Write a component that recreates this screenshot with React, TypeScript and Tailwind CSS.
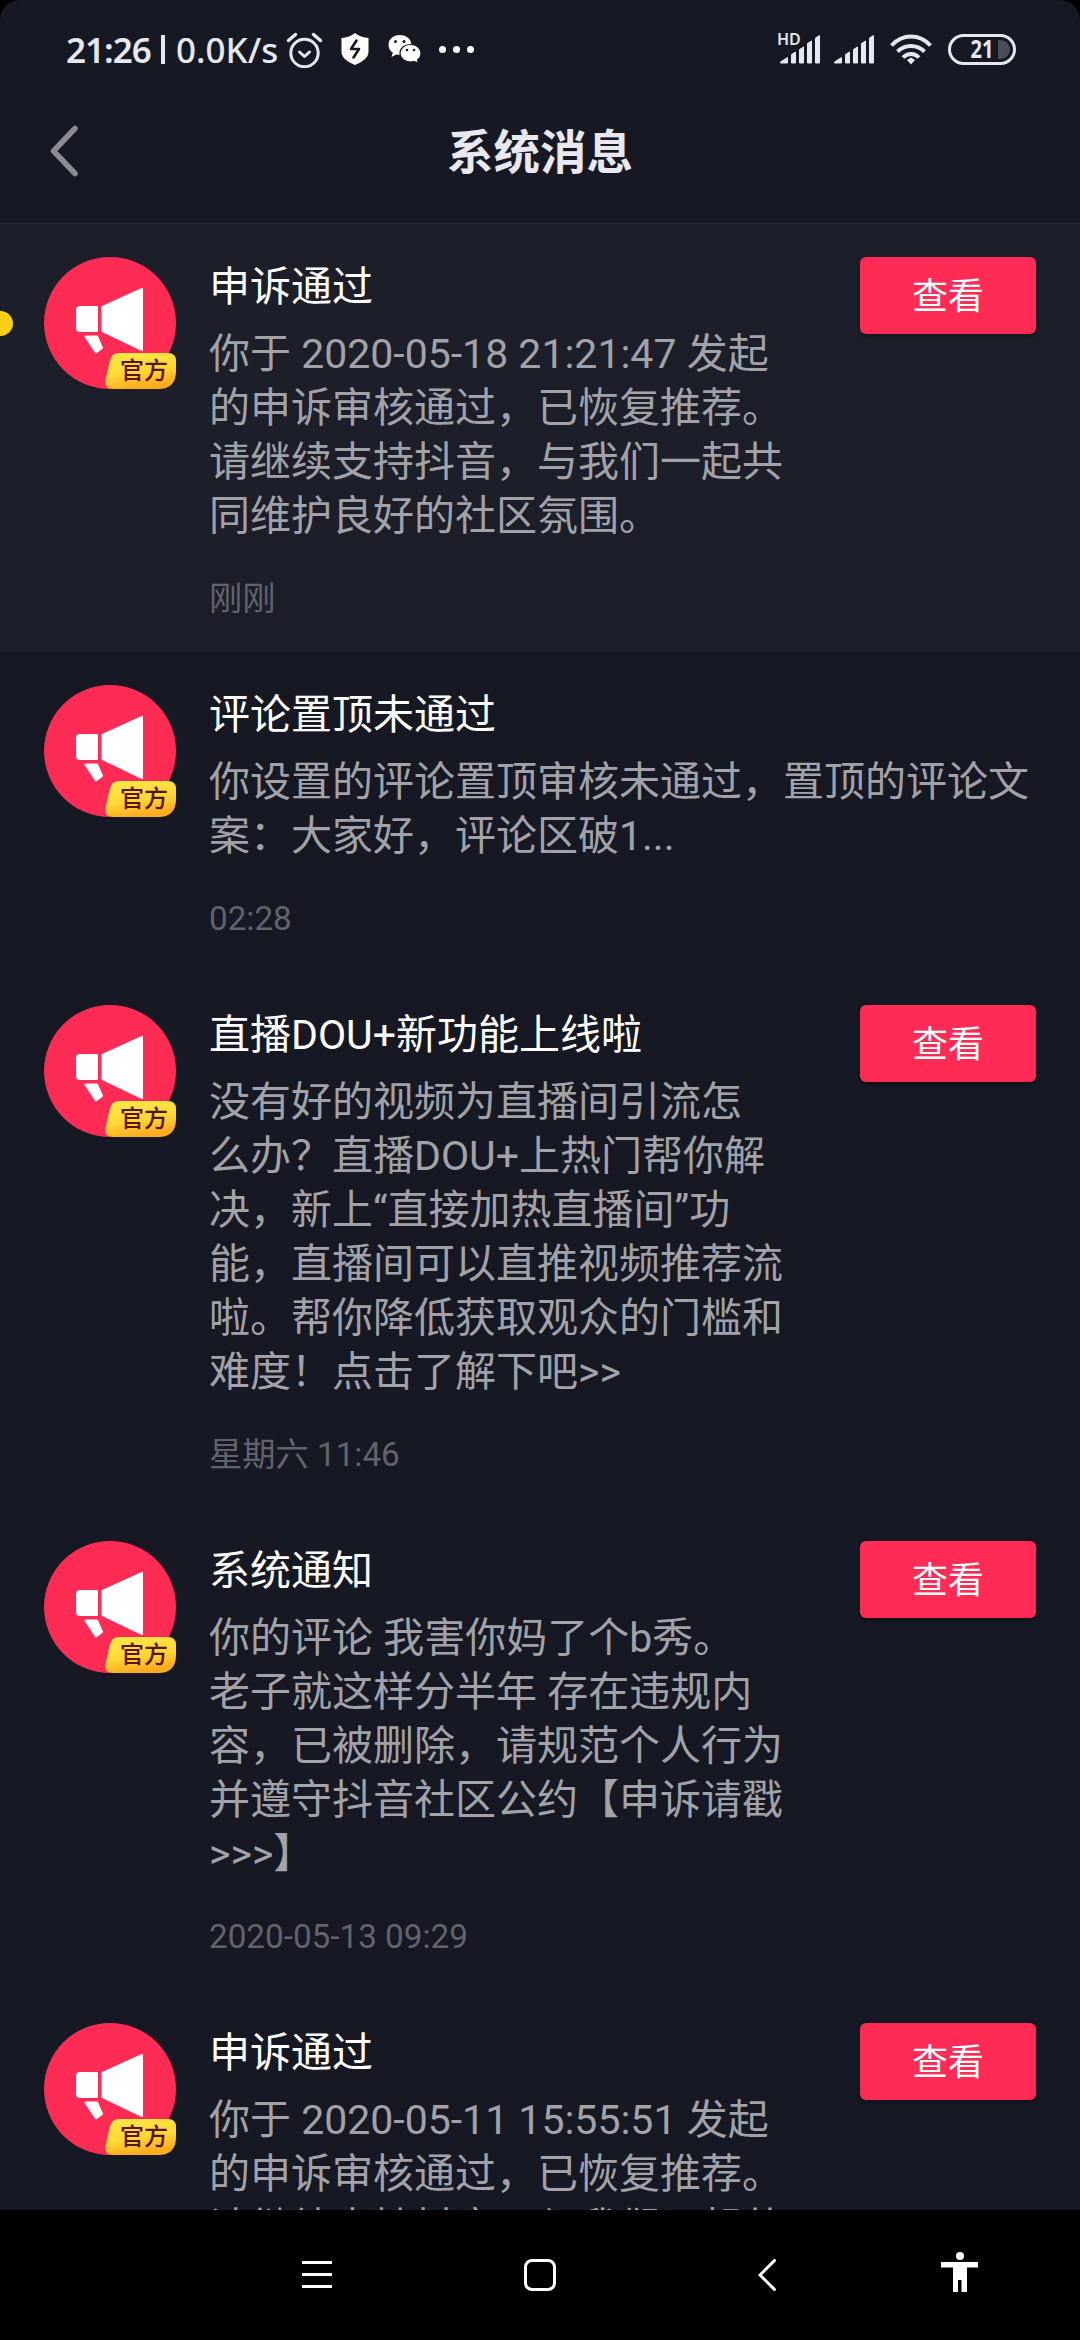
import type { ReactNode } from 'react';

interface Message {
  id: number;
  title: string;
  lines: string[];
  time: string;
  action?: string;
  unread?: boolean;
}

const MESSAGES: Message[] = [
  {
    id: 1,
    title: '申诉通过',
    lines: [
      '你于 2020-05-18 21:21:47 发起',
      '的申诉审核通过，已恢复推荐。',
      '请继续支持抖音，与我们一起共',
      '同维护良好的社区氛围。'
    ],
    time: '刚刚',
    action: '查看',
    unread: true
  },
  {
    id: 2,
    title: '评论置顶未通过',
    lines: ['你设置的评论置顶审核未通过，置顶的评论文', '案：大家好，评论区破1...'],
    time: '02:28'
  },
  {
    id: 3,
    title: '直播DOU+新功能上线啦',
    lines: [
      '没有好的视频为直播间引流怎',
      '么办？直播DOU+上热门帮你解',
      '决，新上“直接加热直播间”功',
      '能，直播间可以直推视频推荐流',
      '啦。帮你降低获取观众的门槛和',
      '难度！点击了解下吧>>'
    ],
    time: '星期六 11:46',
    action: '查看'
  },
  {
    id: 4,
    title: '系统通知',
    lines: [
      '你的评论 我害你妈了个b秀。',
      '老子就这样分半年 存在违规内',
      '容，已被删除，请规范个人行为',
      '并遵守抖音社区公约【申诉请戳',
      '>>>】'
    ],
    time: '2020-05-13 09:29',
    action: '查看'
  },
  {
    id: 5,
    title: '申诉通过',
    lines: [
      '你于 2020-05-11 15:55:51 发起',
      '的申诉审核通过，已恢复推荐。',
      '请继续支持抖音，与我们一起共'
    ],
    time: '',
    action: '查看'
  }
];

function SignalBars() {
  return (
    <svg width="42" height="31" viewBox="0 0 42 31" fill="#e6e8f0" stroke="#e6e8f0" strokeWidth="1" strokeLinejoin="round">
      <path d="M1.500 29v-1L8.500 23.500V29z" />
      <path d="M12.500 29V20.500l4-2.500v11z" />
      <path d="M20.500 29V15.500l4-2.500v16z" />
      <path d="M28.500 29V9.500l4-2.500v22z" />
      <path d="M36.500 29V4l4-2.500V29z" />
    </svg>
  );
}

function StatusBar() {
  return (
    <div className="flex h-[98px] items-center text-[#e6e8f0]">
      <div className="ml-[66px] flex w-[220px] items-center whitespace-pre font-['Noto_Sans'] text-[35px] font-semibold leading-none">
        <span className="w-[86px] tracking-[-1px]">21:26</span>
        <span className="ml-[9px] h-[29px] w-[4px] bg-[#e6e8f0]" />
        <span className="ml-[11px] font-medium">0.0K/s</span>
      </div>
      <svg width="37" height="38" viewBox="0 0 37 38" fill="none" stroke="#e6e8f0" strokeWidth="3" strokeLinecap="round" strokeLinejoin="round">
        <circle cx="18.500" cy="23" r="13.700" />
        <path d="M13.500 22l5 4.500 5-4.500" />
        <path d="M2.500 10.500l7-6M34.500 10.500l-7-6" strokeWidth="3.500" />
      </svg>
      <svg className="ml-[17px]" width="30" height="34" viewBox="0 0 30 34">
        <path d="M15 1c3.500 3 8.500 4.500 13.500 5v13.500c0 6.500-6 10.500-13.500 13.500C7.500 30 1.500 26 1.500 19.500V6c5-.5 10-2 13.500-5z" fill="#fff" />
        <path d="M16.500 8.500l-5.500 8.500 8 0-5.500 8.500" fill="none" stroke="#161823" strokeWidth="2.600" strokeLinejoin="round" strokeLinecap="round" />
      </svg>
      <svg className="ml-[17px]" width="36" height="32" viewBox="0 0 36 32">
        <path d="M13 2C6 2 1.500 6.500 1.500 12c0 3.300 1.700 6 4.300 7.800L4.500 24l4.800-2.400c1.200.3 2.400.4 3.700.4 6.500 0 11.500-4.400 11.500-10S19.500 2 13 2z" fill="#fff" />
        <path d="M23.500 11.500c6.200 0 10.500 3.800 10.500 8.700 0 2.700-1.300 5-3.500 6.700l1 3.600-4.200-2c-1.200.3-2.400.5-3.800.5-6 0-10.500-3.900-10.500-8.800s4.500-8.700 10.500-8.700z" fill="#fff" stroke="#161823" strokeWidth="1.200" />
        <g fill="#161823">
          <circle cx="8.500" cy="8.500" r="1.500" />
          <circle cx="17" cy="8.500" r="1.500" />
          <circle cx="20" cy="17" r="1.300" />
          <circle cx="27" cy="17" r="1.300" />
        </g>
      </svg>
      <div className="ml-[16px] flex gap-[7px]">
        <span className="h-[7px] w-[7px] rounded-full bg-white" />
        <span className="h-[7px] w-[7px] rounded-full bg-white" />
        <span className="h-[7px] w-[7px] rounded-full bg-white" />
      </div>

      <div className="ml-auto mr-[64px] flex items-center">
        <div className="relative">
          <SignalBars />
          <span className="absolute -left-[2px] -top-[2px] font-['Noto_Sans'] text-[16px] font-semibold leading-[15px]">HD</span>
        </div>
        <div className="ml-[12px]">
          <SignalBars />
        </div>
        <svg className="ml-[15px]" width="42" height="31" viewBox="0 0 42 31" fill="none" stroke="#e6e8f0" strokeWidth="4">
          <path d="M1.500 11.500C12.500-.5 29.500-.5 40.500 11.500" />
          <path d="M7.500 17.500c7.700-7.300 19.300-7.300 27 0" />
          <path d="M13 23.500c4.500-4.800 11.500-4.800 16 0" />
          <path d="M21 23.500l4 2.500-4 4.500-4-4.500z" fill="#e6e8f0" stroke="none" />
        </svg>
        <div className="relative ml-[16px] flex h-[31px] w-[68px] items-center justify-center rounded-full border-[3px] border-[#e6e8f0]">
          <span className="scale-x-[0.820] font-['Noto_Sans'] text-[24.500px] font-bold leading-none">21</span>
          <span className="absolute right-[3px] top-[3px] h-[19px] w-[12px] rounded-r-full bg-[#4b4c56]" />
        </div>
      </div>
    </div>
  );
}

function TitleBar() {
  return (
    <header className="relative flex h-[126px] items-center justify-center border-b border-[#2c2e39]">
      <svg className="absolute left-[49px] top-[27px]" width="30" height="52" viewBox="0 0 30 52" fill="none" stroke="#8a8b93" strokeWidth="5.500" strokeLinecap="round" strokeLinejoin="round">
        <path d="M26 3.500L4.500 26 26 48.500" />
      </svg>
      <h1 className="pb-[15px] text-[46.500px] font-bold leading-[60px] text-[#e8e9ee]">系统消息</h1>
    </header>
  );
}

function OfficialAvatar() {
  return (
    <div className="relative h-[132px] w-[132px] shrink-0">
      <svg width="132" height="132" viewBox="0 0 132 132">
        <defs>
          <linearGradient id="badge" x1="0" y1="0" x2="0.300" y2="1">
            <stop offset="0" stopColor="#ffe94a" />
            <stop offset="0.600" stopColor="#fdd835" />
            <stop offset="1" stopColor="#fdac20" />
          </linearGradient>
        </defs>
        <circle cx="66" cy="66" r="66" fill="#fe2c55" />
        <g fill="#fff" stroke="#fff" strokeWidth="2" strokeLinejoin="round">
          <path d="M36 50h17v24H36q-3 0-3-3V53q0-3 3-3z" />
          <path d="M58.500 50L98 32v61L58.500 74z" />
          <path d="M41.500 79.500H53L58 91l-6 4.500z" />
        </g>
        <path d="M75 96h49q8 0 8 8v10q0 18-18 18H69q-9 0-7.500-9l4-18q2-9 9.500-9z" fill="url(#badge)" />
      </svg>
      <span className="absolute left-[76px] top-[98px] text-[24px] font-medium leading-[32px] text-[#5a1414]">官方</span>
    </div>
  );
}

function MessageItem({ message }: { message: Message }) {
  return (
    <article className={message.unread ? 'relative flex bg-[#1c1e29] px-[44px] pt-[33px]' : 'relative flex px-[44px] pt-[33px]'}>
      {message.unread && <span className="absolute left-0 top-[87px] h-[25px] w-[13px] rounded-r-full bg-[#face15]" />}
      <OfficialAvatar />
      <div className="ml-[33px] min-w-0 flex-1 whitespace-pre pt-[2px]">
        <h2 className="h-[68px] text-[41px] leading-[56px] text-white">{message.title}</h2>
        <div className="text-[41px] leading-[54px] text-[#a2a3a9]">
          {message.lines.map((line) => (
            <p key={line}>{line}</p>
          ))}
        </div>
        <time className="mt-[34px] block h-[75px] text-[33.250px] leading-[44px] text-[#62646c]">{message.time}</time>
      </div>
      {message.action && (
        <button className="h-[77px] w-[176px] shrink-0 rounded-[6px] bg-[#fe2c55] pt-[3px] text-[36px] leading-[74px] text-white shadow-[0_2px_5px_rgba(0,0,0,0.3)]">
          {message.action}
        </button>
      )}
    </article>
  );
}

function NavButton({ className, children }: { className: string; children: ReactNode }) {
  return <button className={className}>{children}</button>;
}

function NavBar() {
  return (
    <nav className="flex h-[130px] shrink-0 items-center bg-black">
      <NavButton className="ml-[302px]">
        <svg width="30" height="30" viewBox="0 0 30 30" fill="#fff">
          <path d="M0 1h30v3H0zM0 13h30v3H0zM0 25h30v3H0z" />
        </svg>
      </NavButton>
      <NavButton className="ml-[192px]">
        <svg width="32" height="32" viewBox="0 0 32 32" fill="none" stroke="#fff" strokeWidth="3">
          <rect x="1.500" y="1.500" width="29" height="29" rx="6.500" />
        </svg>
      </NavButton>
      <NavButton className="ml-[202px]">
        <svg width="20" height="32" viewBox="0 0 20 32" fill="none" stroke="#fff" strokeWidth="3" strokeLinecap="round">
          <path d="M16.500 1.500L2 16l14.500 14.500" />
        </svg>
      </NavButton>
      <NavButton className="ml-[163px] pb-[6px]">
        <svg width="38" height="40" viewBox="0 0 38 40" fill="#fff">
          <circle cx="19" cy="4" r="4" />
          <path d="M0 10h37v5.500H26V40h-5.500V28h-3.500v12h-5V15.500H0z" />
        </svg>
      </NavButton>
    </nav>
  );
}

export default function App() {
  return (
    <div className="h-[2340px] w-[1080px] overflow-hidden bg-black">
      <div className="flex h-full flex-col overflow-hidden rounded-t-[20px] bg-[#161823] font-[Roboto,'Noto_Sans_CJK_SC',sans-serif]">
        <StatusBar />
        <TitleBar />
        <main className="min-h-0 flex-1 overflow-hidden">
          {MESSAGES.map((message) => (
            <MessageItem key={message.id} message={message} />
          ))}
        </main>
        <NavBar />
      </div>
    </div>
  );
}
